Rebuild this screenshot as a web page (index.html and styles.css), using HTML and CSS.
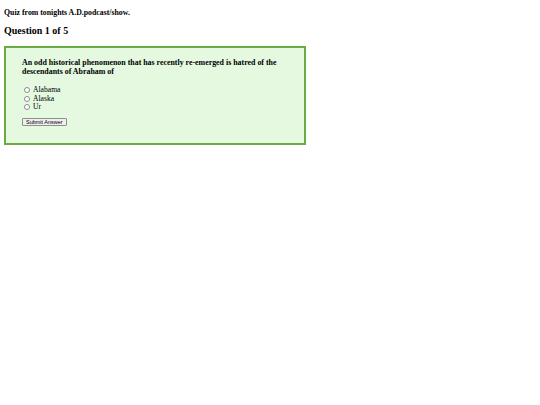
FILE: index.html
```html
<!DOCTYPE html>
<html lang="en">
<head>
<meta charset="UTF-8">
<title>Quiz</title>
<link rel="stylesheet" href="styles.css">
</head>
<body>

<p class="intro">Quiz from tonights A.D.podcast/show.</p>
<h2 class="quiz-title">Question 1 of 5</h2>

<div class="quiz-box">
  <form class="quiz-form">
    <h3 class="question">An odd historical phenomenon that has recently re-emerged is hatred of the descendants of Abraham of</h3>
    <label class="answer"><input type="radio" name="answer" value="a"> Alabama</label>
    <label class="answer"><input type="radio" name="answer" value="b"> Alaska</label>
    <label class="answer"><input type="radio" name="answer" value="c"> Ur</label>
    <button type="submit" class="submit-btn">Submit Answer</button>
  </form>
</div>

</body>
</html>
```

FILE: styles.css
```css
/* Quiz page */
body {
  margin: 4px;
  font-family: "Liberation Serif", "Times New Roman", serif;
  color: #000;
  background: #fff;
}
.intro {
  margin: 4px 0;
  font-size: 7.8px;
  line-height: 9px;
  font-weight: bold;
}
.quiz-title {
  margin: 8px 0 9px;
  font-size: 10px;
  line-height: 12px;
  font-weight: bold;
}
.quiz-box {
  width: 298px;
  background-color: #e4f9e0;
  border: 2px solid #6aab44;
  padding: 10px 0 17px;
}
.quiz-form {
  padding: 0 16px;
}
.question {
  margin: 0 0 10px;
  font-size: 7.9px;
  line-height: 9px;
  font-weight: bold;
}
.answer {
  display: flex;
  align-items: center;
  gap: 3px;
  font-size: 7.6px;
  line-height: 8.5px;
  padding-left: 2px;
}
.answer input {
  appearance: none;
  margin: 0;
  width: 6px;
  height: 6px;
  border: 1px solid #8c8c8c;
  border-radius: 50%;
  background: #fff;
}
.answer input:checked {
  background: radial-gradient(circle, #333 40%, #fff 45%);
}
.submit-btn {
  display: block;
  margin-top: 6px;
  height: 8px;
  font-family: "Liberation Sans", Arial, sans-serif;
  font-size: 5.5px;
  line-height: 6px;
  padding: 0 3px;
  background: #f0f0f0;
  border: 1px solid #8f8f8f;
  border-radius: 1px;
}
```
